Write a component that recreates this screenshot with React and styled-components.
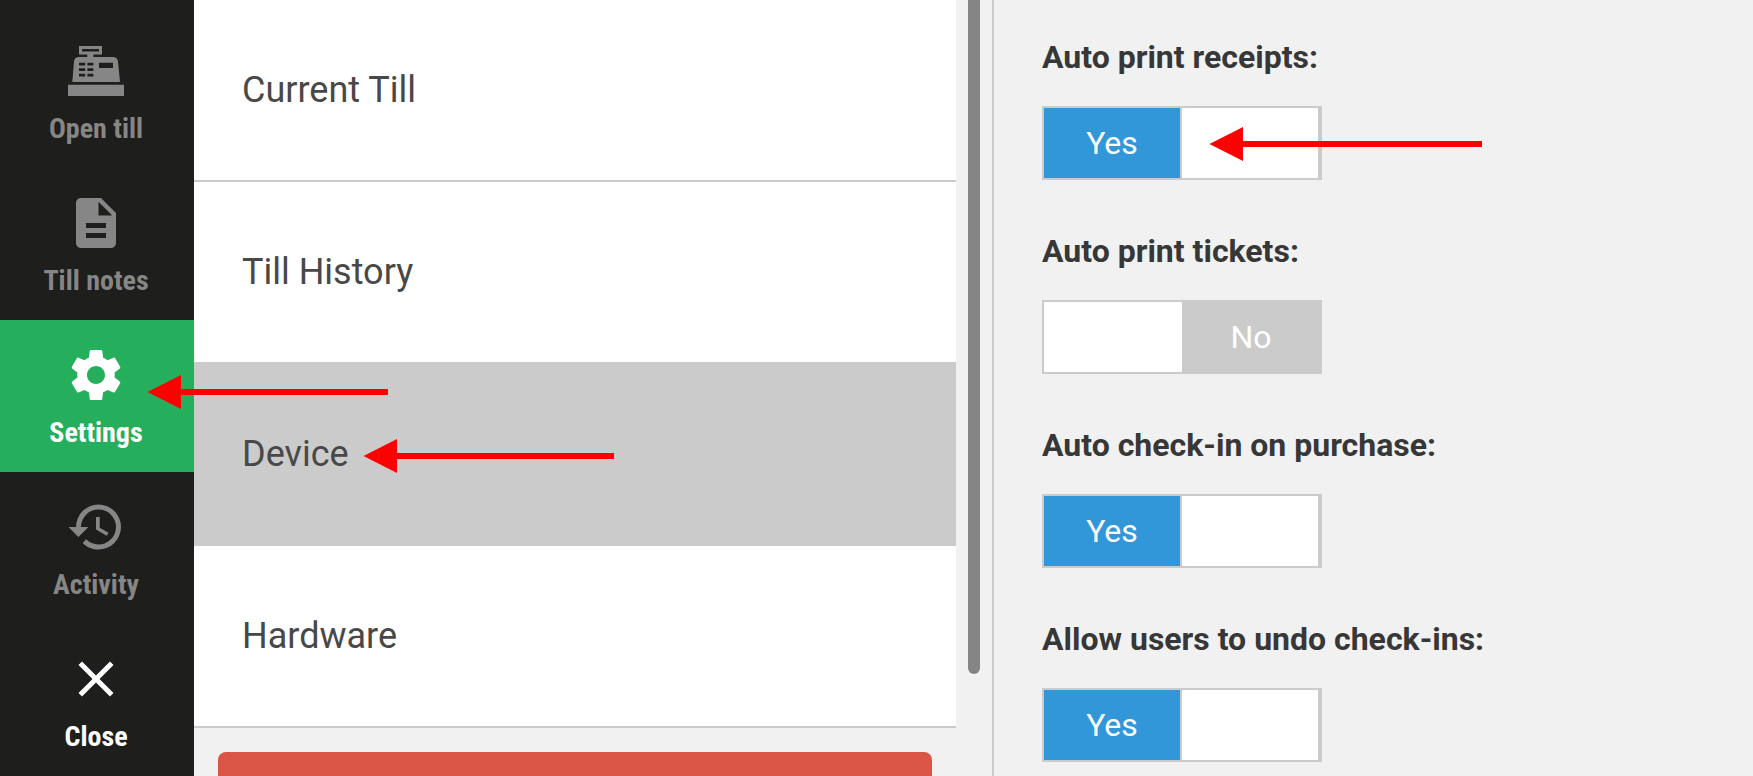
import React, { useState } from 'react';
import styled, { createGlobalStyle } from 'styled-components';

const GlobalStyle = createGlobalStyle`
  * {
    box-sizing: border-box;
  }
  body {
    margin: 0;
    overflow: hidden;
    background: #f1f1f1;
    font-family: Roboto, 'Liberation Sans', sans-serif;
  }
`;

const Layout = styled.div`
  display: flex;
  height: 100vh;
`;

const Sidebar = styled.nav`
  flex: 0 0 194px;
  padding-top: 16px;
  background: #1e1e1c;
`;
const SidebarButton = styled.button`
  position: relative;
  display: flex;
  flex-direction: column;
  align-items: center;
  gap: 10px;
  width: 100%;
  height: 152px;
  padding: 25px 2px 0 0;
  border: 0;
  background: ${(props) => (props.$active ? '#25af5c' : 'transparent')};
  color: ${(props) => (props.$bright ? '#fff' : '#868686')};
  font-family: 'Roboto Condensed', 'Liberation Sans Narrow', Roboto, sans-serif;
  font-size: 28px;
  font-weight: 700;
  line-height: 36px;
  cursor: pointer;
`;
const Icon = styled.svg`
  display: block;
  width: 60px;
  height: 60px;
  fill: currentColor;
`;

const ListPanel = styled.section`
  display: flex;
  flex: 0 1 800px;
  min-width: 0;
  border-right: 2px solid #cbcbcb;
`;
const ListScroll = styled.div`
  flex: 1;
  min-width: 0;
  overflow: hidden;
`;
const List = styled.ul`
  margin: 0;
  padding: 0;
  list-style: none;
`;
const ListButton = styled.button`
  display: flex;
  align-items: center;
  width: 100%;
  height: 182px;
  padding: 0 48px;
  border: 0;
  border-bottom: 2px solid #cbcbcb;
  background: ${(props) => (props.$active ? '#cbcbcb' : '#fff')};
  color: #484848;
  font-family: inherit;
  font-size: 36px;
  line-height: 44px;
  text-align: left;
  cursor: pointer;
`;
const ListText = styled.span`
  position: relative;
`;
const DangerButton = styled.button`
  display: block;
  width: calc(100% - 48px);
  height: 96px;
  margin: 24px;
  border: 0;
  border-radius: 8px;
  background: #db5546;
  cursor: pointer;
`;
const ScrollTrack = styled.div`
  flex: 0 0 36px;
  padding: 0 12px;
`;
const ScrollThumb = styled.div`
  height: 674px;
  border-radius: 0 0 6px 6px;
  background: #858585;
`;

const Options = styled.main`
  display: flex;
  flex: 1;
  flex-direction: column;
  gap: 52px;
  min-width: 0;
  padding: 38px 48px;
`;
const Option = styled.div`
  display: flex;
  flex-direction: column;
  align-items: flex-start;
  gap: 30px;
`;
const OptionLabel = styled.label`
  color: #373737;
  font-size: 32px;
  font-weight: 700;
  line-height: 38px;
`;
const Toggle = styled.div`
  position: relative;
  display: flex;
  gap: ${(props) => (props.$on ? '2px' : '0')};
  width: 280px;
  height: 74px;
  border: 2px solid #cbcbcb;
  border-right-width: ${(props) => (props.$on ? '4px' : '2px')};
  background: #cbcbcb;
`;
const ToggleInput = styled.input`
  position: absolute;
  inset: 0;
  width: 100%;
  height: 100%;
  margin: 0;
  opacity: 0;
  cursor: pointer;
`;
const ToggleHalf = styled.span`
  display: flex;
  flex: 1;
  align-items: center;
  justify-content: center;
  background: ${(props) => props.$color};
  color: #fff;
  font-size: 32px;
  line-height: 38px;
`;

// sits on top of whatever it points at
const ArrowSvg = styled.svg`
  position: absolute;
  z-index: 1;
  top: ${(props) => props.$top};
  left: ${(props) => props.$left};
  height: 34px;
  fill: #f00;
  pointer-events: none;
`;

const Arrow = ({ length, top, left }) => (
  <ArrowSvg width={length} viewBox={`0 0 ${length} 34`} $top={top} $left={left} aria-hidden="true">
    <path d={`M0.5 17L34 0V14H${length}V20H34V34Z`} />
  </ArrowSvg>
);

const RegisterIcon = () => (
  <Icon viewBox="0 0 60 60" aria-hidden="true">
    <path
      fillRule="evenodd"
      d="M13 5H36V13.4H27.3V16H47Q51.4 16 52 20.5L54 41H6.3L8 20.5Q8.4 16 13 16H21.3V13.4H13ZM16 8V10.4H33V8ZM13 21.7V24.4H19.2V21.7ZM21.4 21.7V24.4H27.4V21.7ZM13 27.2V30H19.2V27.2ZM21.4 27.2V30H27.4V27.2ZM13 32.8V35.6H19.2V32.8ZM21.4 32.8V35.6H27.4V32.8ZM33 21.7V27H47V21.7Z"
    />
    <path d="M2 43.7H58V55H2Z" />
  </Icon>
);

const NotesIcon = () => (
  <Icon viewBox="0 0 24 24" aria-hidden="true">
    <path d="M14 2H6c-1.1 0-2 .9-2 2v16c0 1.1.9 2 2 2h12c1.1 0 2-.9 2-2V8l-6-6zm2 16H8v-2h8v2zm0-4H8v-2h8v2zm-3-5V3.5L18.5 9H13z" />
  </Icon>
);

const GearIcon = () => (
  <Icon viewBox="0 0 24 24" aria-hidden="true">
    <path d="M19.43 12.98c.04-.32.07-.64.07-.98s-.03-.66-.07-.98l2.11-1.65c.19-.15.24-.42.12-.64l-2-3.46c-.12-.22-.39-.3-.61-.22l-2.49 1c-.52-.4-1.08-.73-1.69-.98l-.38-2.65C14.46 2.18 14.25 2 14 2h-4c-.25 0-.46.18-.49.42l-.38 2.65c-.61.25-1.17.59-1.69.98l-2.49-1c-.23-.09-.49 0-.61.22l-2 3.46c-.13.22-.07.49.12.64l2.11 1.65c-.04.32-.07.65-.07.98s.03.66.07.98l-2.11 1.65c-.19.15-.24.42-.12.64l2 3.46c.12.22.39.3.61.22l2.49-1c.52.4 1.08.73 1.69.98l.38 2.65c.03.24.24.42.49.42h4c.25 0 .46-.18.49-.42l.38-2.65c.61-.25 1.17-.59 1.69-.98l2.49 1c.23.09.49 0 .61-.22l2-3.46c.12-.22.07-.49-.12-.64l-2.11-1.65zM12 15.6c-1.99 0-3.6-1.61-3.6-3.6s1.61-3.6 3.6-3.6 3.6 1.61 3.6 3.6-1.61 3.6-3.6 3.6z" />
  </Icon>
);

const HistoryIcon = () => (
  <Icon viewBox="0 0 24 24" aria-hidden="true">
    <path d="M13.5 8H12V13L16.28 15.54L17 14.33L13.5 12.25V8M13 3A9 9 0 0 0 4 12H1L4.96 16.03L9 12H6A7 7 0 0 1 13 5A7 7 0 0 1 20 12A7 7 0 0 1 13 19C11.07 19 9.32 18.21 8.06 16.94L6.64 18.36C8.27 20 10.5 21 13 21A9 9 0 0 0 22 12A9 9 0 0 0 13 3" />
  </Icon>
);

const CloseIcon = () => (
  <Icon viewBox="0 0 24 24" aria-hidden="true">
    <path d="M19 6.41L17.59 5L12 10.59L6.41 5L5 6.41L10.59 12L5 17.59L6.41 19L12 13.41L17.59 19L19 17.59L13.41 12Z" />
  </Icon>
);

const rows = ['Current Till', 'Till History', 'Device', 'Hardware'];

const options = [
  { id: 'receipts', label: 'Auto print receipts:', on: true, arrow: true },
  { id: 'tickets', label: 'Auto print tickets:', on: false },
  { id: 'checkin', label: 'Auto check-in on purchase:', on: true },
  { id: 'undo', label: 'Allow users to undo check-ins:', on: true },
];

const YesNoOption = (props) => {
  const { id, label, on, arrow } = props;
  const [checked, setChecked] = useState(on);

  return (
    <Option>
      <OptionLabel htmlFor={id}>{label}</OptionLabel>
      <Toggle $on={checked}>
        <ToggleHalf $color={checked ? '#3197d9' : '#fff'}>{checked && 'Yes'}</ToggleHalf>
        <ToggleHalf $color={checked ? '#fff' : '#cbcbcb'}>{!checked && 'No'}</ToggleHalf>
        <ToggleInput
          type="checkbox"
          id={id}
          checked={checked}
          onChange={(e) => setChecked(e.target.checked)}
        />
        {arrow && <Arrow length={273} top="19px" left="165px" />}
      </Toggle>
    </Option>
  );
};

const App = () => {
  const [current, setCurrent] = useState('Device');

  return (
    <Layout>
      <GlobalStyle />
      <Sidebar>
        <SidebarButton type="button"><RegisterIcon />Open till</SidebarButton>
        <SidebarButton type="button"><NotesIcon />Till notes</SidebarButton>
        <SidebarButton type="button" $active $bright>
          <GearIcon />Settings
          <Arrow length={241} top="55px" left="147px" />
        </SidebarButton>
        <SidebarButton type="button"><HistoryIcon />Activity</SidebarButton>
        <SidebarButton type="button" $bright><CloseIcon />Close</SidebarButton>
      </Sidebar>
      <ListPanel>
        <ListScroll>
          <List>
            {rows.map((row) => (
              <li key={row}>
                <ListButton type="button" $active={row === current} onClick={() => setCurrent(row)}>
                  <ListText>
                    {row}
                    {row === 'Device' && <Arrow length={251} top="7px" left="calc(100% + 14px)" />}
                  </ListText>
                </ListButton>
              </li>
            ))}
          </List>
          <DangerButton type="button" aria-label="Log out" />
        </ListScroll>
        <ScrollTrack>
          <ScrollThumb />
        </ScrollTrack>
      </ListPanel>
      <Options>
        {options.map((option) => (
          <YesNoOption key={option.id} {...option} />
        ))}
      </Options>
    </Layout>
  );
};

export default App;
